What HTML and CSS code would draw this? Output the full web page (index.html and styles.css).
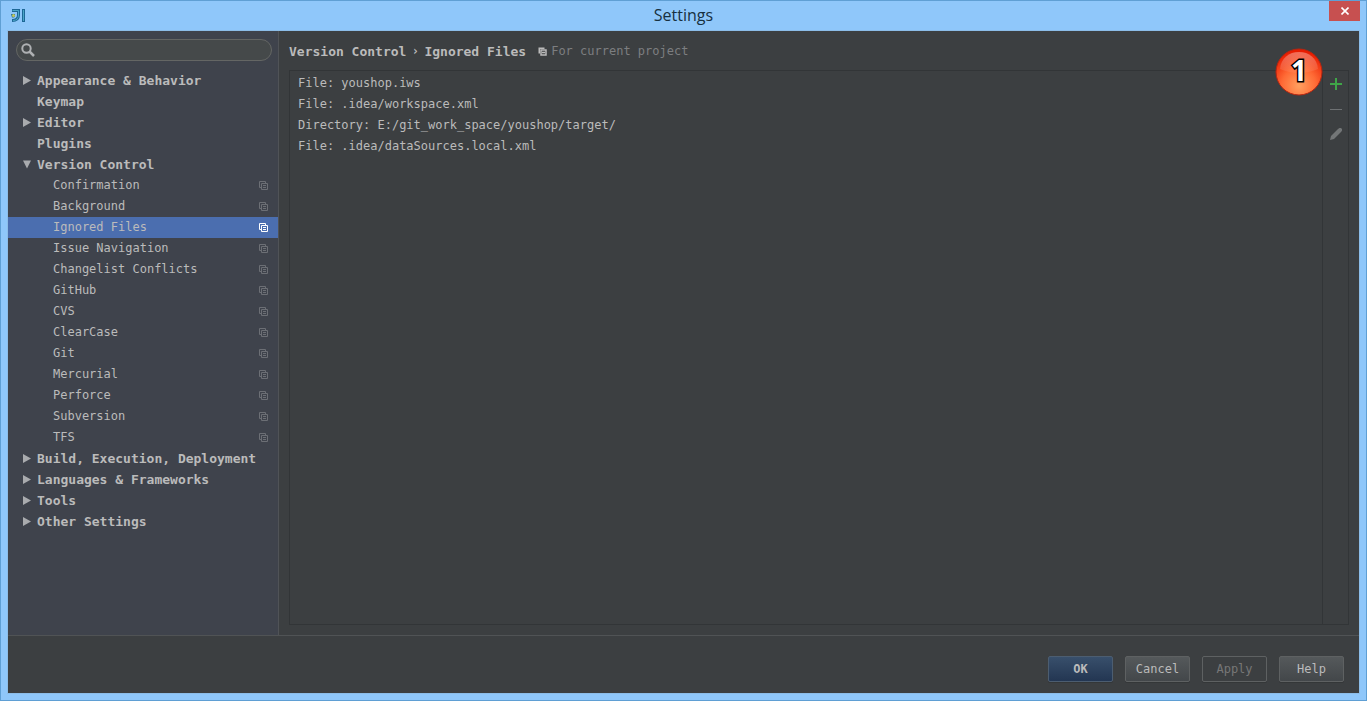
FILE: index.html
```
<!DOCTYPE html>
<html lang="en">
<head>
    <meta charset="UTF-8">
    <meta name="viewport" content="width=device-width, initial-scale=1.0">
    <title>Settings</title>
    <link rel="stylesheet" href="styles.css">
</head>
<body>
    <!-- shared icons -->
    <svg class="sprite" aria-hidden="true">
        <symbol id="right" viewBox="0 0 8 9"><path d="M0 0L8 4.500L0 9Z"/></symbol>
        <symbol id="down" viewBox="0 0 8 9"><path d="M0 0.500H8L4 8.500Z"/></symbol>
        <symbol id="project" viewBox="0 0 9 9"><path d="M2 6.500H0.500V0.500H6.500V2M2.500 2.500H8.500V8.500H2.500ZM4 4.500H7M4 6.500H7" fill="none" stroke="currentColor"/></symbol>
        <symbol id="project-bold" viewBox="0 0 9 9"><path d="M0.500 0.500H6.500V2H2V6.500H0.500Z" fill="currentColor"/><path d="M3 3H8V8H3ZM4 5.500H7" fill="none" stroke="currentColor" stroke-width="1.500"/></symbol>
    </svg>

    <div class="window">
        <header class="titlebar">
            <svg class="app-icon" viewBox="0 0 16 16" width="16" height="16">
                <path d="M2 2.500H8.500V7C8.500 10.500 6.500 12.500 2 12.500" fill="none" stroke="#1d6796" stroke-width="3"/>
                <path d="M2.500 2.500H8.500V7C8.500 10.500 6.500 12.500 3 12.500" fill="none" stroke="#4aa5c6"/>
                <path d="M1 6H5V8Q5 9.500 2 9.500Z" fill="#2a6f86"/>
                <circle cx="3.500" cy="7.500" r="1.500" fill="#c3c65a"/>
                <path d="M13.500 1V14" stroke="#1d6796" stroke-width="3"/>
                <path d="M13.500 2V13" stroke="#4aa5c6"/>
            </svg>
            <h1>Settings</h1>
            <button class="close" aria-label="Close">
                <svg viewBox="0 0 8 8" width="8" height="8"><path d="M0.500 0.500L7.500 7.500M7.500 0.500L0.500 7.500" stroke="#fff" stroke-width="1.600"/></svg>
            </button>
        </header>

        <div class="dialog">
            <div class="main">
                <aside class="sidebar">
                    <div class="search">
                        <svg viewBox="0 0 14 14" width="14" height="14"><circle cx="5.500" cy="5.500" r="4.200" fill="none" stroke="#afb1b3" stroke-width="2"/><path d="M8.500 8.500L13 13" stroke="#afb1b3" stroke-width="2.500"/></svg>
                        <input type="text" aria-label="Search settings">
                    </div>
                    <ul class="tree">
                        <li class="group"><svg class="arrow"><use href="#right"/></svg><span>Appearance &amp; Behavior</span></li>
                        <li class="group"><span>Keymap</span></li>
                        <li class="group"><svg class="arrow"><use href="#right"/></svg><span>Editor</span></li>
                        <li class="group"><span>Plugins</span></li>
                        <li class="group"><svg class="arrow"><use href="#down"/></svg><span>Version Control</span></li>
                        <li class="item"><span>Confirmation</span><svg class="project"><use href="#project"/></svg></li>
                        <li class="item"><span>Background</span><svg class="project"><use href="#project"/></svg></li>
                        <li class="item selected"><span>Ignored Files</span><svg class="project"><use href="#project"/></svg></li>
                        <li class="item"><span>Issue Navigation</span><svg class="project"><use href="#project"/></svg></li>
                        <li class="item"><span>Changelist Conflicts</span><svg class="project"><use href="#project"/></svg></li>
                        <li class="item"><span>GitHub</span><svg class="project"><use href="#project"/></svg></li>
                        <li class="item"><span>CVS</span><svg class="project"><use href="#project"/></svg></li>
                        <li class="item"><span>ClearCase</span><svg class="project"><use href="#project"/></svg></li>
                        <li class="item"><span>Git</span><svg class="project"><use href="#project"/></svg></li>
                        <li class="item"><span>Mercurial</span><svg class="project"><use href="#project"/></svg></li>
                        <li class="item"><span>Perforce</span><svg class="project"><use href="#project"/></svg></li>
                        <li class="item"><span>Subversion</span><svg class="project"><use href="#project"/></svg></li>
                        <li class="item"><span>TFS</span><svg class="project"><use href="#project"/></svg></li>
                        <li class="group"><svg class="arrow"><use href="#right"/></svg><span>Build, Execution, Deployment</span></li>
                        <li class="group"><svg class="arrow"><use href="#right"/></svg><span>Languages &amp; Frameworks</span></li>
                        <li class="group"><svg class="arrow"><use href="#right"/></svg><span>Tools</span></li>
                        <li class="group"><svg class="arrow"><use href="#right"/></svg><span>Other Settings</span></li>
                    </ul>
                </aside>

                <section class="content">
                    <div class="crumbs">
                        <h2>Version Control</h2>
                        <span class="sep">›</span>
                        <h2>Ignored Files</h2>
                        <svg class="project"><use href="#project-bold"/></svg>
                        <span class="hint">For current project</span>
                    </div>
                    <div class="panel">
                        <ul class="files">
                            <li>File: youshop.iws</li>
                            <li>File: .idea/workspace.xml</li>
                            <li>Directory: E:/git_work_space/youshop/target/</li>
                            <li>File: .idea/dataSources.local.xml</li>
                        </ul>
                        <div class="tools">
                            <button aria-label="Add"><svg viewBox="0 0 12 12" width="12" height="12"><path d="M6 0V12M0 6H12" stroke="#3fa648" stroke-width="2"/></svg></button>
                            <button aria-label="Remove"><svg viewBox="0 0 12 12" width="12" height="12"><path d="M0 6.500H12" stroke="#6e7173"/></svg></button>
                            <button aria-label="Edit"><svg viewBox="0 0 12 12" width="12" height="12"><path d="M0 12L1 8L8 1Q10 -1 11.500 0.500Q13 2 11 4L4 11Z" fill="#737677"/></svg></button>
                        </div>
                        <div class="badge">
                            <svg viewBox="0 0 48 48" width="48" height="48">
                                <defs>
                                    <radialGradient id="ball" cx="0.500" cy="0.800" r="0.750">
                                        <stop offset="0" stop-color="#ffa060"/>
                                        <stop offset="0.500" stop-color="#ff6a35"/>
                                        <stop offset="1" stop-color="#e81c00"/>
                                    </radialGradient>
                                    <linearGradient id="shine" x1="0" y1="0" x2="0" y2="1">
                                        <stop offset="0" stop-color="#fff" stop-opacity="0.350"/>
                                        <stop offset="1" stop-color="#fff" stop-opacity="0.050"/>
                                    </linearGradient>
                                </defs>
                                <circle cx="24" cy="24" r="23" fill="url(#ball)" stroke="#b9240f"/>
                                <path d="M5 21C6 10 14 4 24 4S42 10 43 21Q24 29 5 21Z" fill="url(#shine)"/>
                            </svg>
                            <span>1</span>
                        </div>
                    </div>
                </section>
            </div>

            <footer class="footer">
                <button class="btn primary">OK</button>
                <button class="btn">Cancel</button>
                <button class="btn" disabled>Apply</button>
                <button class="btn">Help</button>
            </footer>
        </div>
    </div>
</body>
</html>
```
FILE: styles.css
```
* {
    box-sizing: border-box;
}

body {
    margin: 0;
    font-family: "DejaVu Sans Mono", monospace;
    font-size: 12px;
    line-height: 21px;
    color: #bbbbbb;
}

ul {
    list-style: none;
    margin: 0;
    padding: 0;
}

button {
    font: inherit;
    padding: 0;
    border: none;
    background: none;
    color: inherit;
}

.sprite {
    display: none;
}

.window {
    display: flex;
    flex-direction: column;
    height: 100vh;
    padding: 0 7px 7px;
    background: #8fc7fa;
    border: 1px solid #5f9fd4;
}

.titlebar {
    display: grid;
    grid-template-columns: 1fr auto 1fr;
    align-items: center;
    height: 30px;
    flex: none;
}

.app-icon {
    margin-left: 2px;
}

.titlebar h1 {
    margin: 0;
    font: 16px/28px "Open Sans", sans-serif;
    align-self: start;
    color: #17303f;
}

.close {
    justify-self: end;
    align-self: start;
    display: flex;
    align-items: center;
    justify-content: center;
    width: 31px;
    height: 20px;
    margin-right: -1px;
    background: #c75050;
}

.dialog {
    flex: 1;
    display: flex;
    flex-direction: column;
    min-height: 0;
    background: #3c3f41;
    box-shadow: 0 0 0 1px #8cbde8;
}

.main {
    flex: 1;
    display: flex;
    min-height: 0;
}

.sidebar {
    width: 271px;
    flex: none;
    padding-top: 8px;
    background: #3f434c;
    border-right: 1px solid #505357;
}

.search {
    display: flex;
    align-items: center;
    gap: 4px;
    height: 22px;
    margin: 0 6px 9px 8px;
    padding: 0 10px 0 4px;
    background: #45494a;
    border: 1px solid #646664;
    border-radius: 11px;
}

.search input {
    flex: 1;
    min-width: 0;
    border: none;
    outline: none;
    background: none;
    color: inherit;
    font: inherit;
}

.tree li {
    display: flex;
    align-items: center;
    height: 21px;
}

.tree .group {
    position: relative;
    padding-left: 29px;
    font-size: 13px;
    font-weight: bold;
}

.arrow {
    position: absolute;
    left: 15px;
    width: 8px;
    height: 9px;
    fill: #a9abae;
}

.tree .item {
    justify-content: space-between;
    padding: 0 10px 0 45px;
}

.project {
    width: 9px;
    height: 9px;
    color: #6c6f75;
}

.tree .selected {
    background: #4b6eaf;
}

.selected .project {
    color: #ffffff;
}

.content {
    flex: 1;
    display: flex;
    flex-direction: column;
    min-width: 0;
    padding: 10px 10px;
}

.crumbs {
    display: flex;
    align-items: center;
    height: 21px;
    margin-bottom: 8px;
}

.crumbs h2 {
    margin: 0;
    font-size: 13px;
}

.crumbs .sep {
    width: 18px;
    text-align: center;
    font-weight: bold;
}

.crumbs .project {
    margin: 0 4px 0 12px;
    color: #bbbbbb;
}

.hint {
    color: #7c7e80;
}

.panel {
    position: relative;
    flex: 1;
    display: flex;
    border: 1px solid #323537;
}

.files {
    flex: 1;
    padding: 2px 8px;
}

.tools {
    display: flex;
    flex-direction: column;
    width: 26px;
    border-left: 1px solid #323537;
}

.tools button {
    display: flex;
    align-items: center;
    justify-content: center;
    height: 25px;
}

.badge {
    position: absolute;
    top: -23px;
    right: 25px;
    width: 48px;
    height: 48px;
}

.badge span {
    position: absolute;
    inset: 0;
    font: bold 28px/44px "Open Sans", sans-serif;
    text-align: center;
    color: #ffffff;
    -webkit-text-stroke: 3px #000000;
    paint-order: stroke fill;
}

.footer {
    display: flex;
    justify-content: flex-end;
    gap: 12px;
    padding: 20px 15px 11px;
    border-top: 1px solid #505355;
}

.btn {
    width: 65px;
    height: 26px;
    border: 1px solid #5e6162;
    border-radius: 2px;
    background: linear-gradient(#55595b, #43474a);
    box-shadow: 0 1px 0 #343738;
}

.btn.primary {
    background: linear-gradient(#384f6b, #233652);
    border-color: #4c5d70;
    font-weight: bold;
}

.btn:disabled {
    background: none;
    color: #777777;
}
```
